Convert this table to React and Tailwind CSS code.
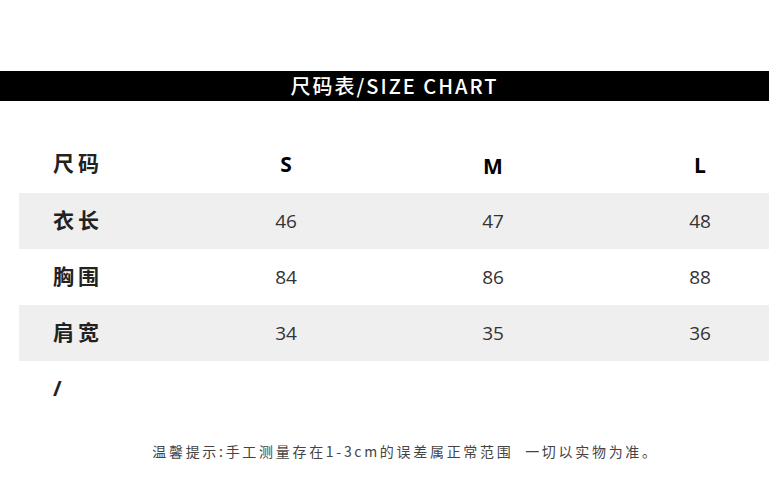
export default function App() {
  const rows = [
    { label: "衣长", v: ["46", "47", "48"], gray: true },
    { label: "胸围", v: ["84", "86", "88"], gray: false },
    { label: "肩宽", v: ["34", "35", "36"], gray: true },
  ];
  return (
    <div className="w-[769px] h-[491px] bg-white flex flex-col overflow-hidden font-['Noto_Sans_CJK_SC','Noto_Sans',sans-serif]">
      <div className="h-[71px]" />
      <div className="h-[30px] bg-black text-white flex items-center justify-center pl-[20px] text-[20px] font-medium tracking-[2px]">
        尺码表/SIZE CHART
      </div>
      <div className="h-[36px]" />
      <div className="pl-[19px]">
        <div className="grid grid-cols-[120px_120px_120px_120px] gap-x-[87px] h-[56px] items-center">
          <div className="pl-[34px] text-[21px] font-bold text-[#222] pb-[4px] tracking-[4px] whitespace-nowrap">尺码</div>
          <div className="text-center text-[21px] font-bold text-black font-['Open_Sans',sans-serif]">S</div>
          <div className="text-center text-[21px] font-bold text-black pt-[4px] font-['Open_Sans',sans-serif]">M</div>
          <div className="text-center text-[21px] font-bold text-black pt-[2px] font-['Open_Sans',sans-serif]">L</div>
        </div>
        {rows.map((r) => (
          <div
            key={r.label}
            className={
              "grid grid-cols-[120px_120px_120px_120px] gap-x-[87px] h-[56px] items-center " +
              (r.gray ? "bg-[#efefef]" : "bg-white")
            }
          >
            <div className="pl-[34px] text-[21px] font-bold text-[#222] pb-[2px] tracking-[4px] whitespace-nowrap">{r.label}</div>
            {r.v.map((x, i) => (
              <div key={i} className="text-center text-[19px] text-[#333] font-['Open_Sans',sans-serif]">
                {x}
              </div>
            ))}
          </div>
        ))}
        <div className="h-[56px] flex items-center pl-[34px] text-[21px] font-bold text-[#222] font-['Open_Sans',sans-serif]">
          /
        </div>
      </div>
      <div className="h-[24px]" />
      <div className="text-center text-[14px] text-[#444] tracking-[2.7px] pl-[42px] whitespace-pre">
        温馨提示:手工测量存在1-3cm的误差属正常范围  一切以实物为准。
      </div>
    </div>
  );
}
